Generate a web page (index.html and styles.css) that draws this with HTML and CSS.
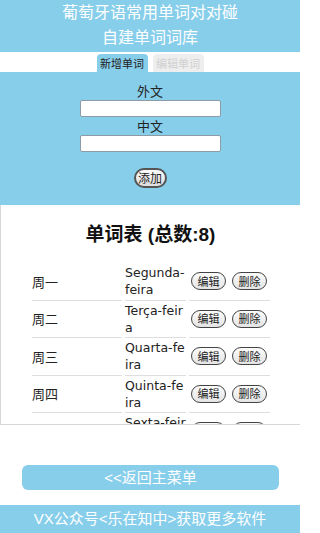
FILE: index.html
```html
<!DOCTYPE html>
<html lang="zh">
<head>
<meta charset="utf-8">
<title>葡萄牙语常用单词对对碰</title>
<link rel="stylesheet" href="styles.css">
</head>
<body>
<div class="page">
  <header class="header">
    <div class="title">葡萄牙语常用单词对对碰</div>
    <div class="title">自建单词词库</div>
  </header>
  <nav class="tabs">
    <span class="tab active">新增单词</span>
    <span class="tab">编辑单词</span>
  </nav>
  <section class="form">
    <label class="label">外文</label>
    <input class="field" type="text">
    <label class="label">中文</label>
    <input class="field" type="text">
    <button class="add">添加</button>
  </section>
  <section class="list">
    <h2 class="heading">单词表 (总数:8)</h2>
    <table class="words">
      <colgroup><col class="c1"><col class="c2"><col class="c3"></colgroup>
      <tr><td>周一</td><td class="pt">Segunda-feira</td><td><button class="act">编辑</button><button class="act">删除</button></td></tr>
      <tr><td>周二</td><td class="pt">Terça-feira</td><td><button class="act">编辑</button><button class="act">删除</button></td></tr>
      <tr><td>周三</td><td class="pt">Quarta-feira</td><td><button class="act">编辑</button><button class="act">删除</button></td></tr>
      <tr><td>周四</td><td class="pt">Quinta-feira</td><td><button class="act">编辑</button><button class="act">删除</button></td></tr>
      <tr><td>周五</td><td class="pt">Sexta-feira</td><td><button class="act">编辑</button><button class="act">删除</button></td></tr>
      <tr><td>周六</td><td class="pt">Sábado</td><td><button class="act">编辑</button><button class="act">删除</button></td></tr>
      <tr><td>周日</td><td class="pt">Domingo</td><td><button class="act">编辑</button><button class="act">删除</button></td></tr>
    </table>
  </section>
  <div class="back-wrap"><button class="back">&lt;&lt;返回主菜单</button></div>
  <footer class="footer">VX公众号&lt;乐在知中&gt;获取更多软件</footer>
</div>
</body>
</html>
```
FILE: styles.css
```css
* { box-sizing: border-box; }
html, body { margin: 0; padding: 0; background: #fff; }
body {
  font-family: "Liberation Sans", "Noto Sans CJK SC", sans-serif;
  color: #222;
}
.page { width: 300px; height: 533px; display: flex; flex-direction: column; overflow: hidden; }

.header {
  background: #87ceeb;
  height: 52px;
  display: flex;
  flex-direction: column;
  align-items: center;
}
.title { color: #fff; font-size: 16px; line-height: 25px; }

.tabs {
  height: 20px;
  display: flex;
  justify-content: center;
  align-items: flex-end;
  gap: 5px;
}
.tab {
  width: 51px;
  height: 18px;
  font-family: "Noto Sans CJK SC", sans-serif;
  font-size: 11px;
  line-height: 18px;
  text-align: center;
  background: #eeeeee;
  color: #d0d0d0;
  border-radius: 4px 4px 0 0;
}
.tab.active { background: #87ceeb; color: #222; }

.form {
  background: #87ceeb;
  height: 133px;
  padding-top: 11px;
  display: flex;
  flex-direction: column;
  align-items: center;
}
.label { font-size: 13px; line-height: 17px; color: #222; }
.field {
  width: 141px;
  height: 17px;
  border: 1px solid #8d9ba6;
  border-radius: 2px;
  background: #fff;
  padding: 0;
  margin: 0 0 1px;
}
.add {
  margin-top: 15px;
  width: 33px;
  height: 20px;
  border: 2px solid #555;
  border-radius: 10px;
  background: linear-gradient(#fbfbfb, #dedede);
  font-family: "Noto Sans CJK SC", sans-serif;
  font-size: 12px;
  line-height: 14px;
  padding: 0;
  color: #222;
}

.list {
  height: 220px;
  overflow: hidden;
  border-left: 1px solid #d8d8d8;
  border-bottom: 1px solid #d8d8d8;
}
.heading {
  margin: 0;
  padding-top: 17px;
  font-size: 19px;
  line-height: 26px;
  text-align: center;
  font-weight: bold;
  color: #111;
}
.words {
  margin: 15px 0 0 28px;
  table-layout: fixed;
  width: 244px;
  border-collapse: separate;
  border-spacing: 3px 0;
  font-size: 14px;
}
.c1 { width: 90px; }
.c2 { width: 61px; }
.c3 { width: 81px; }
.words td {
  padding: 1.25px 0;
  line-height: 17px;
  border-bottom: 1px solid #dedede;
  vertical-align: middle;
  word-break: break-all;
  color: #222;
}
.words td:first-child { font-family: "Noto Sans CJK SC", sans-serif; font-size: 13px; }
.words td.pt { font-family: "DejaVu Sans", sans-serif; font-size: 12.5px; }
.words td:last-child { padding-left: 2px; white-space: nowrap; }
.act {
  width: 35px;
  height: 18px;
  padding: 0;
  margin-right: 6px;
  border: 1.5px solid #444;
  border-radius: 9px;
  background: linear-gradient(#fbfbfb, #e4e4e4);
  font-family: "Noto Sans CJK SC", sans-serif;
  font-size: 11px;
  line-height: 13px;
  color: #222;
  vertical-align: middle;
}

.back-wrap { padding: 40px 21px 0 22px; height: 80px; }
.back {
  width: 257px;
  height: 25px;
  border: none;
  border-radius: 6px;
  background: #87ceeb;
  color: #fff;
  font-family: "Liberation Sans", "Noto Sans CJK SC", sans-serif;
  font-size: 15px;
  line-height: 25px;
  padding: 0;
}
.footer {
  height: 28px;
  background: #87ceeb;
  color: #fff;
  font-size: 15px;
  line-height: 28px;
  text-align: center;
}
```
